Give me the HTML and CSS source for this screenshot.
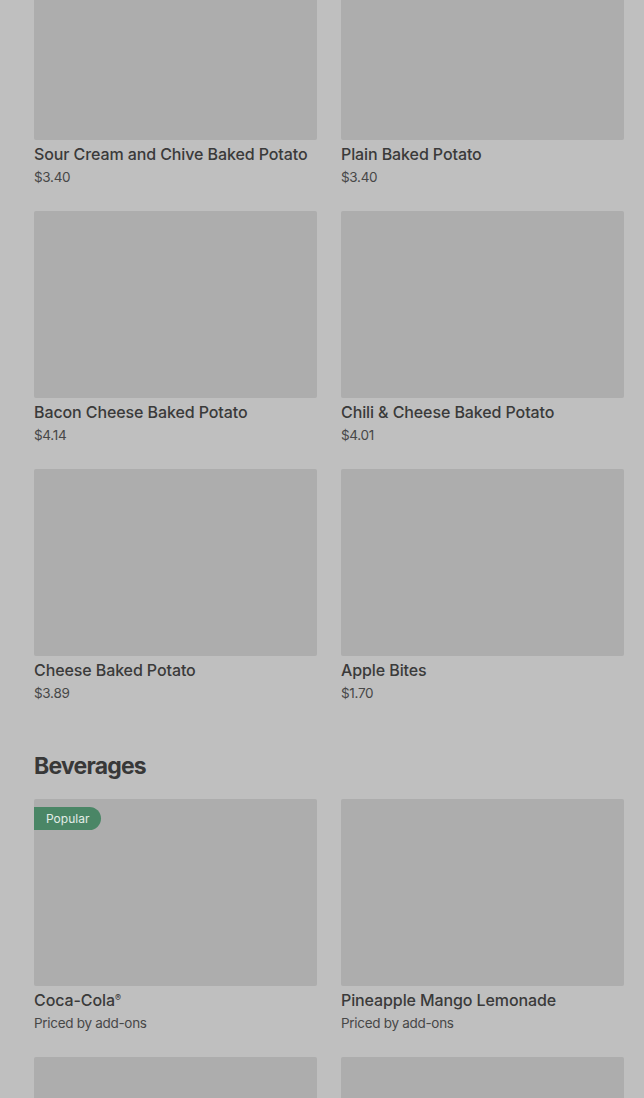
FILE: index.html
```html
<!DOCTYPE html>
<html lang="en">
<head>
    <meta charset="UTF-8">
    <meta name="viewport" content="width=device-width, initial-scale=1.0">
    <title>Menu</title>
    <link rel="stylesheet" href="styles.css">
</head>
<body>
    <div class="page">
        <section class="section">
            <div class="grid">
                <div class="item">
                    <div class="thumb"></div>
                    <div class="name">Sour Cream and Chive Baked Potato</div>
                    <div class="price">$3.40</div>
                </div>
                <div class="item">
                    <div class="thumb"></div>
                    <div class="name">Plain Baked Potato</div>
                    <div class="price">$3.40</div>
                </div>
                <div class="item">
                    <div class="thumb"></div>
                    <div class="name">Bacon Cheese Baked Potato</div>
                    <div class="price">$4.14</div>
                </div>
                <div class="item">
                    <div class="thumb"></div>
                    <div class="name">Chili &amp; Cheese Baked Potato</div>
                    <div class="price">$4.01</div>
                </div>
                <div class="item">
                    <div class="thumb"></div>
                    <div class="name">Cheese Baked Potato</div>
                    <div class="price">$3.89</div>
                </div>
                <div class="item">
                    <div class="thumb"></div>
                    <div class="name">Apple Bites</div>
                    <div class="price">$1.70</div>
                </div>
            </div>
        </section>

        <section class="section">
            <h2 class="section-title">Beverages</h2>
            <div class="grid">
                <div class="item">
                    <div class="thumb">
                        <span class="badge">Popular</span>
                    </div>
                    <div class="name">Coca-Cola<sup>®</sup></div>
                    <div class="price">Priced by add-ons</div>
                </div>
                <div class="item">
                    <div class="thumb"></div>
                    <div class="name">Pineapple Mango Lemonade</div>
                    <div class="price">Priced by add-ons</div>
                </div>
                <div class="item">
                    <div class="thumb"></div>
                    <div class="name">&nbsp;</div>
                    <div class="price">&nbsp;</div>
                </div>
                <div class="item">
                    <div class="thumb"></div>
                    <div class="name">&nbsp;</div>
                    <div class="price">&nbsp;</div>
                </div>
            </div>
        </section>
    </div>
</body>
</html>
```

FILE: styles.css
```css
:root {
    --bg: #bfbfbf;
    --thumb: #adadad;
    --text: #3a3a3a;
    --muted: #474747;
    --green: #4a8666;
}

body {
    margin: 0;
    background-color: var(--bg);
    font-family: 'Inter', 'Roboto', sans-serif;
    color: var(--text);
    overflow: hidden;
}

.page {
    padding: 0 20px 0 34px;
    margin-top: -47px;
}

.section-title {
    margin: 0;
    padding: 49px 0 19px;
    font-size: 23px;
    line-height: 28px;
    font-weight: 700;
    letter-spacing: -0.8px;
    color: #383838;
}

.grid {
    display: grid;
    grid-template-columns: 1fr 1fr;
    column-gap: 24px;
    row-gap: 24px;
}

.item {
    display: flex;
    flex-direction: column;
}

.thumb {
    position: relative;
    height: 187px;
    background-color: var(--thumb);
    border-radius: 2px;
}

.badge {
    position: absolute;
    top: 8px;
    left: 0;
    padding: 0 12px;
    height: 23px;
    line-height: 23px;
    font-size: 12px;
    color: #e3ece6;
    background-color: var(--green);
    border-radius: 0 12px 12px 0;
}

.name {
    margin-top: 3px;
    font-size: 16px;
    line-height: 22px;
    font-weight: 500;
    letter-spacing: -0.1px;
    white-space: nowrap;
}

.name sup {
    font-size: 9px;
    vertical-align: 5px;
    line-height: 0;
}

.price {
    margin-top: 2px;
    font-size: 13.5px;
    line-height: 20px;
    letter-spacing: -0.3px;
    color: var(--muted);
}
```
